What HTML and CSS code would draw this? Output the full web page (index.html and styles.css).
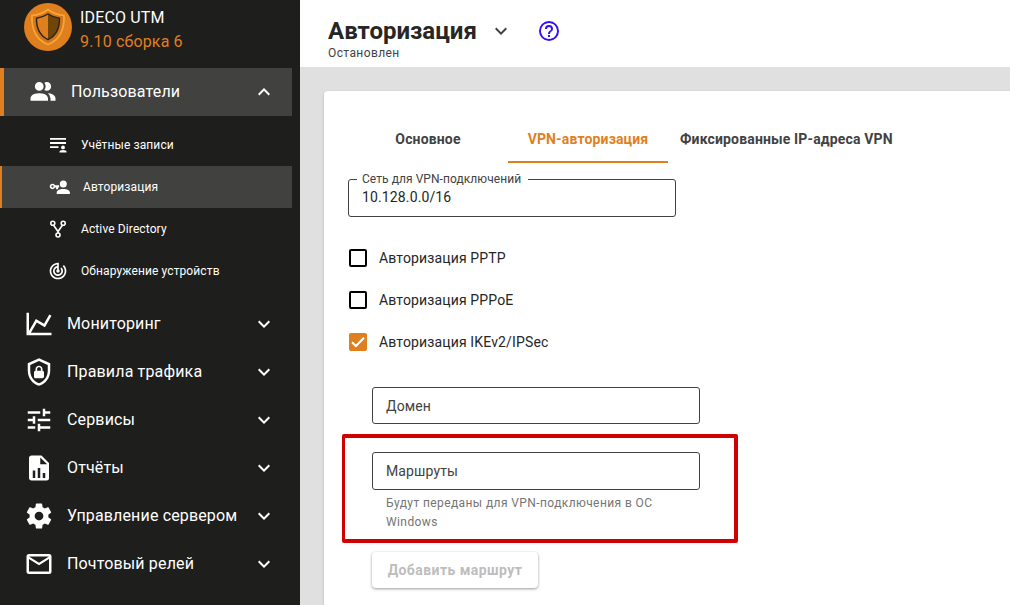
FILE: index.html
```html
<!DOCTYPE html>
<html lang="ru">
<head>
<meta charset="utf-8">
<title>Авторизация — IDECO UTM</title>
<link rel="stylesheet" href="styles.css">
</head>
<body>
<svg class="defs" width="0" height="0"><defs>
<symbol id="down" viewBox="0 0 24 24"><path d="M7.41,8.58L12,13.17L16.59,8.58L18,10L12,16L6,10L7.41,8.58Z"/></symbol>
</defs></svg>
<div class="app">
<aside class="sidebar">
  <div class="brand">
    <svg class="logo" viewBox="0 0 48 48">
      <circle cx="24" cy="24" r="24" fill="#e07f1e"/>
      <path d="M24 6.500C19 10.500 14 12 8 12.500C7.500 25 11.500 36.500 24 41.500C36.500 36.500 40.500 25 40 12.500C34 12 29 10.500 24 6.500Z" fill="#d0761c" stroke="#fba634" stroke-width="1.700"/>
      <path d="M24 11C20 13.500 16.500 14.800 12.500 15.300C12.300 25 15.500 32.500 24 36.700C32.500 32.500 35.700 25 35.500 15.300C31.500 14.800 28 13.500 24 11Z" fill="#e07f1e"/>
      <path d="M24 11V36.700C32.500 32.500 35.700 25 35.500 15.300C31.500 14.800 28 13.500 24 11Z" fill="#704608"/>
      <path d="M24 11C20 13.500 16.500 14.800 12.500 15.300C12.300 25 15.500 32.500 24 36.700C32.500 32.500 35.700 25 35.500 15.300C31.500 14.800 28 13.500 24 11Z" fill="none" stroke="#29231c" stroke-width="1.400"/>
    </svg>
    <div class="brand-text"><div>IDECO UTM</div><div class="version">9.10 сборка 6</div></div>
  </div>
  <nav class="menu">
    <a class="item active"><svg class="icon" viewBox="0 0 24 24"><path d="M16 17V19H2V17S2 13 9 13 16 17 16 17M12.500 7.500A3.500 3.500 0 1 0 9 11A3.500 3.500 0 0 0 12.500 7.500M15.940 13A5.320 5.320 0 0 1 18 17V19H22V17S22 13.370 15.940 13M15 4A3.390 3.390 0 0 0 13.070 4.590A5 5 0 0 1 13.070 10.410A3.390 3.390 0 0 0 15 11A3.500 3.500 0 0 0 15 4Z"/></svg><span>Пользователи</span><svg class="chev up"><use href="#down"/></svg></a>
    <div class="submenu">
      <a class="sub"><svg class="sub-icon" viewBox="0 0 20 20"><path d="M2 3h16v1.700H2zM2 7h16v1.900H2zM2 11.300h8.500v1.700H2z"/><circle cx="15" cy="12.400" r="1.900"/><path d="M11.500 17.500v-.8q0-1.700 3.500-1.700t3.500 1.700v.8z"/></svg><span>Учётные записи</span></a>
      <a class="sub active"><svg class="key-icon" viewBox="0 0 22 20"><circle cx="15.300" cy="7" r="3.500"/><path d="M8.700 17v-1.600c0-2.200 3-3.500 6.600-3.500s6.600 1.300 6.600 3.500V17z"/><path fill-rule="evenodd" d="M6.900 8.300a2.700 2.700 0 1 0 0 2.300h1.200v1.700h2v-1.700h1V8.300zM4.500 8.300a1.100 1.100 0 1 1 0 2.200 1.100 1.100 0 0 1 0-2.200z"/></svg><span>Авторизация</span></a>
      <a class="sub"><svg class="sub-icon" viewBox="0 0 20 20"><g fill="none" stroke="#fff" stroke-width="1.600"><circle cx="4.800" cy="4.300" r="2"/><circle cx="15.200" cy="4.300" r="2"/><circle cx="10" cy="16" r="2"/><path d="M5.600 6.200L10 12.500V14M14.400 6.200L10 12.500"/></g></svg><span>Active Directory</span></a>
      <a class="sub"><svg class="sub-icon" viewBox="0 0 24 24"><path d="M19.070 4.930l-1.410 1.410C19.100 7.790 20 9.790 20 12c0 4.420-3.580 8-8 8s-8-3.580-8-8c0-4.080 3.050-7.440 7-7.930v2.020C8.160 6.570 6 9.030 6 12c0 3.310 2.690 6 6 6s6-2.690 6-6c0-1.660-.67-3.160-1.760-4.240l-1.410 1.410C15.550 9.900 16 10.900 16 12c0 2.210-1.790 4-4 4s-4-1.790-4-4c0-1.860 1.280-3.410 3-3.860v2.140c-.6.35-1 .98-1 1.720 0 1.100.9 2 2 2s2-.9 2-2c0-.74-.4-1.380-1-1.720V2h-1C6.480 2 2 6.480 2 12s4.480 10 10 10 10-4.480 10-10c0-2.760-1.120-5.260-2.930-7.070z"/></svg><span>Обнаружение устройств</span></a>
    </div>
    <a class="item"><svg class="icon" viewBox="0 0 24 24"><path d="M16,11.780L20.240,4.450L21.970,5.450L16.740,14.500L10.230,10.750L5.460,19H22V21H2V3H4V17.540L9.500,8L16,11.780Z"/></svg><span>Мониторинг</span><svg class="chev"><use href="#down"/></svg></a>
    <a class="item"><svg class="icon" viewBox="0 0 24 24"><path d="M21,11C21,16.550 17.160,21.740 12,23C6.840,21.740 3,16.550 3,11V5L12,1L21,5V11M12,21C15.750,20 19,15.540 19,11.220V6.300L12,3.180L5,6.300V11.220C5,15.540 8.250,20 12,21M14.800,11V9.500C14.800,8.100 13.400,7 12,7C10.600,7 9.200,8.100 9.200,9.500V11C8.600,11 8,11.600 8,12.200V15.700C8,16.400 8.600,17 9.200,17H14.700C15.400,17 16,16.400 16,15.800V12.300C16,11.600 15.400,11 14.800,11M13.500,11H10.500V9.500C10.500,8.700 11.200,8.200 12,8.200C12.800,8.200 13.500,8.700 13.500,9.500V11Z"/></svg><span>Правила трафика</span><svg class="chev"><use href="#down"/></svg></a>
    <a class="item"><svg class="icon" viewBox="0 0 24 24"><path d="M3,17V19H9V17H3M3,5V7H13V5H3M13,21V19H21V17H13V15H11V21H13M7,9V11H3V13H7V15H9V9H7M21,13V11H11V13H21M15,9H17V7H21V5H17V3H15V9Z"/></svg><span>Сервисы</span><svg class="chev"><use href="#down"/></svg></a>
    <a class="item"><svg class="icon" viewBox="0 0 24 24"><path d="M13,9H18.500L13,3.500V9M6,2H14L20,8V20A2,2 0 0,1 18,22H6C4.890,22 4,21.100 4,20V4C4,2.890 4.890,2 6,2M7,20H9V14H7V20M11,20H13V12H11V20M15,20H17V16H15V20Z"/></svg><span>Отчёты</span><svg class="chev"><use href="#down"/></svg></a>
    <a class="item"><svg class="icon" viewBox="0 0 24 24"><path d="M12,15.500A3.500,3.500 0 0,1 8.500,12A3.500,3.500 0 0,1 12,8.500A3.500,3.500 0 0,1 15.500,12A3.500,3.500 0 0,1 12,15.500M19.430,12.970C19.470,12.650 19.500,12.330 19.500,12C19.500,11.670 19.470,11.340 19.430,11L21.540,9.370C21.730,9.220 21.780,8.950 21.660,8.730L19.660,5.270C19.540,5.050 19.270,4.960 19.050,5.050L16.560,6.050C16.040,5.660 15.500,5.320 14.870,5.070L14.500,2.420C14.460,2.180 14.250,2 14,2H10C9.750,2 9.540,2.180 9.500,2.420L9.130,5.070C8.500,5.320 7.960,5.660 7.440,6.050L4.950,5.050C4.730,4.960 4.460,5.050 4.340,5.270L2.340,8.730C2.210,8.950 2.270,9.220 2.460,9.370L4.570,11C4.530,11.340 4.500,11.670 4.500,12C4.500,12.330 4.530,12.650 4.570,12.970L2.460,14.630C2.270,14.780 2.210,15.050 2.340,15.270L4.340,18.730C4.460,18.950 4.730,19.030 4.950,18.950L7.440,17.940C7.960,18.340 8.500,18.680 9.130,18.930L9.500,21.580C9.540,21.820 9.750,22 10,22H14C14.250,22 14.460,21.820 14.500,21.580L14.870,18.930C15.500,18.670 16.040,18.340 16.560,17.940L19.050,18.950C19.270,19.030 19.540,18.950 19.660,18.730L21.660,15.270C21.780,15.050 21.730,14.780 21.540,14.630L19.430,12.970Z"/></svg><span>Управление сервером</span><svg class="chev"><use href="#down"/></svg></a>
    <a class="item"><svg class="icon" viewBox="0 0 24 24"><path d="M20,4H4A2,2 0 0,0 2,6V18A2,2 0 0,0 4,20H20A2,2 0 0,0 22,18V6A2,2 0 0,0 20,4M20,18H4V8L12,13L20,8V18M20,6L12,11L4,6V6H20V6Z"/></svg><span>Почтовый релей</span><svg class="chev"><use href="#down"/></svg></a>
  </nav>
</aside>
<main class="main">
  <header class="header">
    <div class="title-row">
      <h1 class="title">Авторизация</h1>
      <svg class="title-chev"><use href="#down"/></svg>
      <svg class="help" viewBox="0 0 24 24"><path d="M11,18H13V16H11V18M12,2A10,10 0 0,0 2,12A10,10 0 0,0 12,22A10,10 0 0,0 22,12A10,10 0 0,0 12,2M12,20C7.590,20 4,16.410 4,12C4,7.590 7.590,4 12,4C16.410,4 20,7.590 20,12C20,16.410 16.410,20 12,20M12,6A4,4 0 0,0 8,10H10A2,2 0 0,1 12,8A2,2 0 0,1 14,10C14,12 11,11.750 11,15H13C13,12.750 16,12.500 16,10A4,4 0 0,0 12,6Z"/></svg>
    </div>
    <div class="status">Остановлен</div>
  </header>
  <section class="card">
    <div class="tabs">
      <div class="tab">Основное</div>
      <div class="tab selected">VPN-авторизация</div>
      <div class="tab">Фиксированные IP-адреса VPN</div>
    </div>
    <fieldset class="network"><legend>Сеть для VPN-подключений</legend><span>10.128.0.0/16</span></fieldset>
    <div class="checks">
      <label class="check"><i class="box"></i><span>Авторизация PPTP</span></label>
      <label class="check"><i class="box"></i><span>Авторизация PPPoE</span></label>
      <label class="check"><i class="box checked"><svg viewBox="0 0 18 18"><path d="M3 9.200L6.900 13.100L15 4.700" fill="none" stroke="#fff" stroke-width="2.100"/></svg></i><span>Авторизация IKEv2/IPSec</span></label>
    </div>
    <div class="nested">
      <div class="field domain"><span>Домен</span></div>
      <div class="routes">
        <div class="field"><span>Маршруты</span></div>
        <p class="hint"><span>Будут переданы для VPN-подключения в ОС</span><br><span>Windows</span></p>
        <div class="highlight"></div>
      </div>
      <button class="add" disabled>Добавить маршрут</button>
    </div>
  </section>
</main>
</div>
</body>
</html>
```

FILE: styles.css
```css
* { box-sizing: border-box; }
body { margin: 0; font-family: Roboto, sans-serif; color: #262626; }
svg { display: block; flex: none; }
.defs { position: absolute; }
.app { display: flex; width: 1010px; height: 605px; overflow: hidden; }
.sidebar { flex: none; width: 300px; background: #1e1e1c; color: #fff; }
.brand { display: flex; gap: 8px; height: 68px; padding: 3px 0 0 24px; }
.logo { width: 48px; height: 48px; }
.brand-text { margin-top: 3px; font-size: 16px; line-height: 24px; letter-spacing: 0.15px; }
.version { color: #e07f1e; }
.menu { padding-right: 8px; }
.item { display: flex; align-items: center; height: 48px; padding: 0 16px 0 24px; font-size: 16px; letter-spacing: 0.15px; }
.item span { padding-bottom: 2px; }
.item.active { background: #41413f; border-left: 4px solid #e07f1e; }
.icon { width: 30px; height: 30px; margin-right: 13px; fill: #fff; }
.chev { width: 24px; height: 24px; margin-left: auto; fill: #fff; }
.up { transform: scaleY(-1); }
.submenu { padding: 8px 0; }
.sub { display: flex; align-items: center; height: 42px; padding-left: 48px; font-size: 12px; letter-spacing: 0.11px; }
.sub.active { padding-left: 46px; background: #41413f; border-left: 2px solid #e07f1e; }
.sub-icon { width: 20px; height: 20px; margin-right: 13px; fill: #fff; }
.key-icon { width: 22px; height: 20px; margin-right: 13px; fill: #fff; }
.main { flex: 1; min-width: 0; background: #e0e0e0; }
.header { height: 67px; padding: 14px 28px 0; background: #fff; }
.title-row { display: flex; align-items: center; height: 33px; }
.title { margin: 0; font-size: 24px; line-height: 32px; font-weight: 700; }
.title-chev { width: 24px; height: 24px; margin-left: 12px; fill: #424242; }
.help { width: 24px; height: 24px; margin-left: 24px; fill: #3410f2; }
.status { font-size: 12px; line-height: 12px; letter-spacing: 0.4px; color: #424242; }
.card { width: 710px; height: 538px; margin: 24px 0 0 24px; padding: 24px; background: #fff; border-radius: 4px 0 0 0; box-shadow: 0 1px 3px rgba(0, 0, 0, .2); }
.tabs { display: flex; height: 48px; }
.tab { display: flex; align-items: center; justify-content: center; min-width: 160px; padding: 0 12px; font-size: 14px; font-weight: 700; letter-spacing: 0.15px; color: #424242; white-space: nowrap; }
.tab.selected { color: #e07f1e; border-bottom: 2px solid #e07f1e; padding-top: 2px; }
.network { display: block; width: 328px; height: 46px; margin: 8px 0 0; padding: 0 13px; border: 1px solid #424242; border-radius: 3px; font-size: 14px; letter-spacing: 0.13px; }
.network legend { margin-left: -5px; padding: 0 7px 0 5px; font-size: 12px; line-height: 16px; letter-spacing: 0.06px; color: #424242; }
.network span { display: block; line-height: 20px; }
.checks { margin-top: 20px; }
.check { display: flex; align-items: center; height: 42px; padding-left: 1px; gap: 12px; font-size: 14px; letter-spacing: 0.14px; }
.box { width: 18px; height: 18px; border: 2px solid #000; border-radius: 2px; }
.box.checked { border: 0; background: #e07f1e; }
.nested { margin: 24px 0 0 24px; }
.field { display: flex; align-items: center; width: 328px; height: 38px; padding-left: 13px; border: 1px solid #424242; border-radius: 3px; font-size: 14px; letter-spacing: 0.13px; color: #424242; }
.domain { height: 37px; }
.routes { position: relative; margin-top: 28px; height: 100px; }
.hint { margin: 4px 0 0 14px; font-size: 12px; line-height: 19px; letter-spacing: 0.4px; color: #757575; }
.highlight { position: absolute; left: -30px; top: -18px; width: 396px; height: 109px; border: 4px solid #d00000; border-top-width: 4px; border-left-width: 3px; border-radius: 2px; }
.add { width: 166px; height: 36px; padding: 0; border: 0; border-radius: 4px; background: #fff; box-shadow: 0 1px 3px rgba(0, 0, 0, .4); font: 700 14px Roboto, sans-serif; letter-spacing: 0.44px; color: #bdbdbd; }
```
